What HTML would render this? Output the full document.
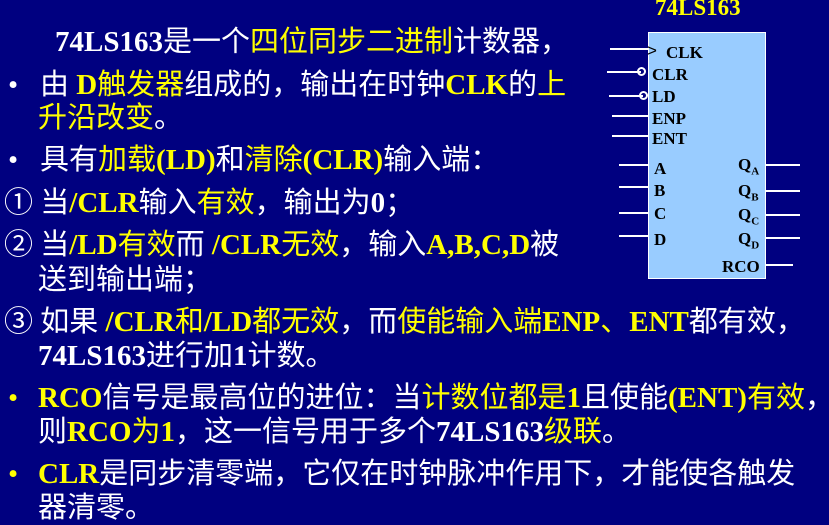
<!DOCTYPE html>
<html><head><meta charset="utf-8"><style>
body{margin:0;width:829px;height:522px;background:#000080;overflow:hidden;position:relative;font-family:"Liberation Serif","Noto Sans CJK SC",serif;color:#fff}
.l{position:absolute;font-size:29px;line-height:34px;white-space:nowrap;font-weight:normal}
.l b{font-family:"Liberation Serif",serif;font-weight:bold}
.y{color:#ffff00}
.chip{position:absolute;left:648px;top:32px;width:116px;height:245px;background:#99ccff;border:1px solid #fff}
.p{position:absolute;font:bold 17px "Liberation Serif",serif;color:#000;line-height:16px}
.w{position:absolute;height:2px;background:#fff}
.c{position:absolute;width:9px;height:9px;border:2px solid #fff;border-radius:50%;box-sizing:border-box}
sub{font-size:11px}
</style></head><body>
<div style="position:absolute;left:655px;top:-5px;font:bold 23px 'Liberation Serif',serif;color:#ffff00">74LS163</div>
<div class="chip"></div>
<div class="w" style="left:610px;top:48px;width:38px"></div>
<div class="p" style="left:647px;top:43px;font-weight:normal;font-family:'Liberation Sans'">&gt;</div>
<div class="p" style="left:666px;top:45px">CLK</div>
<div class="w" style="left:607px;top:71px;width:34px"></div><div class="c" style="left:637px;top:67px"></div>
<div class="p" style="left:652px;top:67px">CLR</div>
<div class="w" style="left:609px;top:95px;width:34px"></div><div class="c" style="left:639px;top:91px"></div>
<div class="p" style="left:652px;top:89px">LD</div>
<div class="w" style="left:612px;top:115px;width:36px"></div><div class="p" style="left:652px;top:111px">ENP</div>
<div class="w" style="left:612px;top:135px;width:36px"></div><div class="p" style="left:652px;top:131px">ENT</div>
<div class="w" style="left:619px;top:164px;width:29px"></div><div class="p" style="left:654px;top:161px">A</div>
<div class="w" style="left:619px;top:186px;width:29px"></div><div class="p" style="left:654px;top:183px">B</div>
<div class="w" style="left:619px;top:212px;width:29px"></div><div class="p" style="left:654px;top:206px">C</div>
<div class="w" style="left:619px;top:235px;width:29px"></div><div class="p" style="left:654px;top:232px">D</div>
<div class="p" style="left:738px;top:157px">Q<sub>A</sub></div><div class="w" style="left:765px;top:164px;width:35px"></div>
<div class="p" style="left:738px;top:183px">Q<sub>B</sub></div><div class="w" style="left:765px;top:190px;width:35px"></div>
<div class="p" style="left:738px;top:207px">Q<sub>C</sub></div><div class="w" style="left:765px;top:214px;width:35px"></div>
<div class="p" style="left:738px;top:231px">Q<sub>D</sub></div><div class="w" style="left:765px;top:237px;width:35px"></div>
<div class="p" style="left:722px;top:259px">RCO</div><div class="w" style="left:765px;top:264px;width:28px"></div>

<div class="l" style="left:55px;top:25px"><b>74LS163</b>是一个<span class="y">四位同步二进制</span>计数器，</div>
<div class="l" style="left:8px;top:68px">•</div>
<div class="l" style="left:40px;top:68px">由 <b class="y">D</b><span class="y">触发器</span>组成的，输出在时钟<b class="y">CLK</b>的<span class="y">上</span></div>
<div class="l y" style="left:38px;top:101px">升沿改变<span style="color:#fff">。</span></div>
<div class="l" style="left:8px;top:143px">•</div>
<div class="l" style="left:40px;top:143px">具有<span class="y">加载<b>(LD)</b></span>和<span class="y">清除<b>(CLR)</b></span>输入端：</div>
<div class="l" style="left:4px;top:186px">① 当<b class="y">/CLR</b>输入<span class="y">有效</span>，输出为<b>0</b>；</div>
<div class="l" style="left:4px;top:228px">② 当<b class="y">/LD</b><span class="y">有效</span>而 <b class="y">/CLR</b><span class="y">无效</span>，输入<b class="y">A,B,C,D</b>被</div>
<div class="l" style="left:38px;top:263px">送到输出端；</div>
<div class="l" style="left:4px;top:305px">③ 如果 <b class="y">/CLR</b><span class="y">和</span><b class="y">/LD</b><span class="y">都无效</span>，而<span class="y">使能输入端<b>ENP</b>、<b>ENT</b></span>都有效，</div>
<div class="l" style="left:38px;top:339px"><b>74LS163</b>进行加<b>1</b>计数。</div>
<div class="l" style="left:8px;top:381px;color:#ffff00">•</div>
<div class="l" style="left:38px;top:381px"><b class="y">RCO</b>信号是最高位的进位：当<span class="y">计数位都是<b>1</b></span>且使能<span class="y"><b>(ENT)</b>有效</span>，</div>
<div class="l" style="left:38px;top:415px">则<span class="y"><b>RCO</b>为<b>1</b></span>，这一信号用于多个<b>74LS163</b><span class="y">级联</span>。</div>
<div class="l" style="left:8px;top:457px;color:#ffff00">•</div>
<div class="l" style="left:38px;top:457px"><b class="y">CLR</b>是同步清零端，它仅在时钟脉冲作用下，才能使各触发</div>
<div class="l" style="left:38px;top:491px">器清零。</div>
</body></html>
